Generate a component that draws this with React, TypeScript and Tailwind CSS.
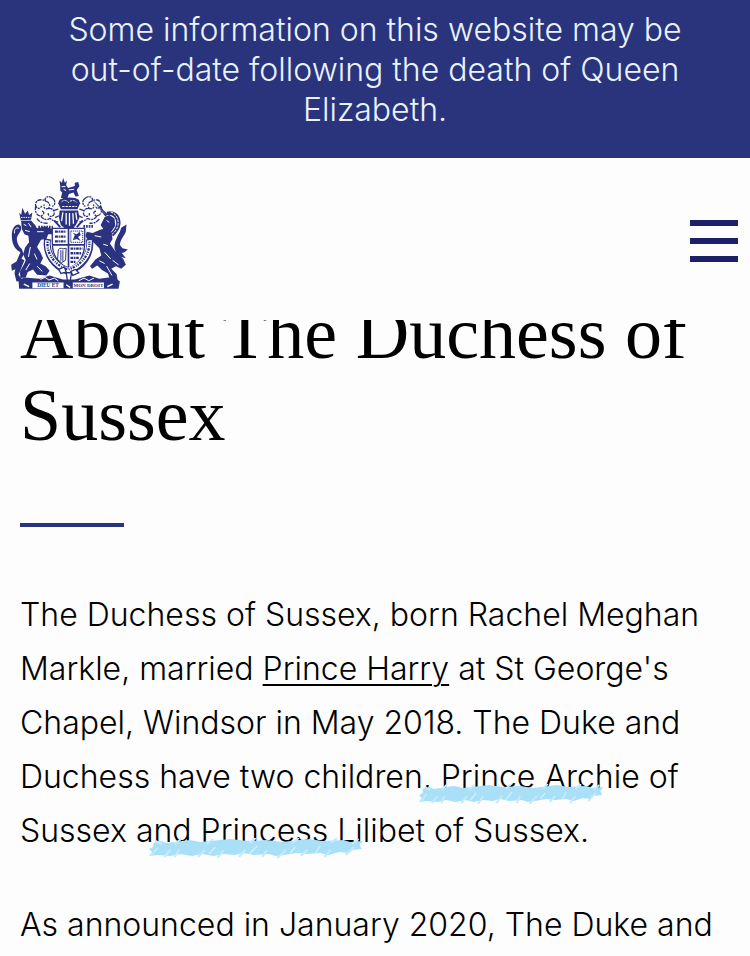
const NAVY = "#2b3380";

function Lion() {
  return (
    <g>
      {/* tail */}
      <path d="M62 262C48 256 36 240 36 214C35 192 44 178 56 178C65 180 66 190 62 199C58 207 52 212 51 221C51 234 57 244 66 252L72 268L50 312L36 318L34 300L50 290Z" />
      <path d="M44 205C42 192 50 186 57 190" fill="none" stroke="#fff" strokeWidth="3" />
      {/* crown */}
      <path d="M58 142L64 150L68 128L76 146L84 136L88 150L98 142L94 164L63 166Z" />
      <path d="M64 157H93" stroke="#fff" strokeWidth="3" strokeDasharray="4 3" />
      {/* head and body */}
      <path d="M64 168L94 166L106 180L112 190L136 184L160 192L162 208L146 208L140 222L124 224L112 246L122 262L130 280L122 296L138 304L150 318L140 332L112 330L100 314L84 322L78 338L62 340L60 320L72 300L78 286L70 268L76 248L88 232L86 212L74 208L66 192Z" />
      <path d="M72 178L80 182M86 174L94 186M76 196L90 200M112 200L132 200M92 246L86 276M104 266L112 284M90 296L78 316M112 304L128 320" fill="none" stroke="#fff" strokeWidth="3" />
      <path d="M50 292L62 280L74 286L66 306L56 330L70 348L50 350L44 326Z" />
    </g>
  );
}

function Unicorn() {
  return (
    <g>
      {/* horn */}
      <path d="M280 104L326 148L318 154Z" />
      <path d="M292 118L316 146" stroke="#fff" strokeWidth="2" strokeDasharray="3 4" />
      {/* mane */}
      <path d="M322 140C346 132 364 150 364 172C364 190 354 202 342 214L332 206C346 194 354 182 350 166C346 152 338 148 324 150Z" />
      <path d="M334 140C352 146 360 164 356 182C352 196 346 202 338 208" fill="none" stroke="#fff" strokeWidth="3" strokeDasharray="8 3" />
      {/* head and body */}
      <path d="M316 156L330 150L346 160L348 182L336 200L340 222L332 236L346 256L372 282L380 300L366 312L350 304L336 312L352 328L356 350L334 350L326 326L308 316L294 302L278 312L272 304L288 284L306 272L300 250L282 232L266 228L258 212L262 200L280 204L302 194L312 192L304 180Z" />
      <path d="M322 166L330 172M286 212L306 216M312 238L326 242M316 262L334 282M300 288L316 296M340 286L358 300M322 304L338 332" fill="none" stroke="#fff" strokeWidth="3" />
      {/* tail */}
      <path d="M346 252C344 230 354 216 362 200L366 188L382 178L380 200C374 214 364 222 362 240L370 250L386 254L376 262L368 264L380 280L364 276L352 266Z" />
    </g>
  );
}

function Mantling() {
  return (
    <g fill="none" stroke={NAVY} strokeWidth="4" strokeDasharray="13 2 6 3">
      <path d="M160 100C146 88 132 96 138 108C124 98 104 106 108 122C112 134 124 130 126 122M138 108C150 110 154 122 146 130C136 134 130 126 134 118M108 122C104 140 112 154 124 152C136 148 134 138 126 138M146 130C160 128 168 140 162 150C154 158 144 152 146 144M124 152C128 164 142 166 150 160C160 164 166 174 176 170M160 100C170 108 166 120 158 124M112 160C118 172 134 176 146 174M176 132L164 136M178 152L166 158" />
      <path d="M256 100C270 88 284 96 278 108C292 98 306 106 304 122C300 134 290 130 288 122M278 108C266 110 262 122 270 130C280 134 286 126 282 118M304 122C312 136 304 152 292 152C280 148 282 138 290 138M270 130C256 128 248 140 254 150C262 158 272 152 270 144M292 152C288 164 274 166 266 160C256 164 250 174 240 170M256 100C246 108 250 120 258 124M300 162C292 172 282 176 270 174M240 132L252 136M238 152L250 158" />
    </g>
  );
}

function Shield() {
  return (
    <g>
      <path d="M158 190H256V232C256 276 236 300 208 310C180 300 158 276 158 232Z" fill="#fff" stroke={NAVY} strokeWidth="4" />
      <path d="M207 190V308M160 240H256" stroke={NAVY} strokeWidth="5" />
      {/* quarters */}
      <path d="M166 200H200M166 215H200M166 229H200" stroke={NAVY} strokeWidth="7" strokeDasharray="9 2 4 2" />
      <path d="M214 198H250V232H214Z" fill="none" stroke={NAVY} strokeWidth="3" strokeDasharray="4 2" />
      <path d="M220 226L226 210L220 204L232 208L240 200L244 210L236 216L244 228L232 222Z" />
      <path d="M174 284L176 258C176 250 184 248 190 252L200 250L198 286L186 294ZM184 256V288M190 256V290" fill="none" stroke={NAVY} strokeWidth="3" />
      <path d="M213 251H249M213 265H246M213 279H238M213 291H228" stroke={NAVY} strokeWidth="7" strokeDasharray="8 2 5 2" />
      {/* garter */}
      <path d="M144 222C136 266 164 306 206 320C248 306 278 268 270 222" fill="none" stroke={NAVY} strokeWidth="21" />
      <path d="M144 226C138 266 166 304 206 316C246 304 274 268 270 226" fill="none" stroke="#fff" strokeWidth="14" />
      <path d="M144 230C140 266 166 302 206 314C246 302 272 268 270 230" fill="none" stroke={NAVY} strokeWidth="7" strokeDasharray="4 3 7 4 3 3" />
      <path d="M178 314L194 306L200 322L184 326ZM214 320L228 314L238 324L220 332ZM200 324H216L212 350H204Z" fill="#fff" stroke={NAVY} strokeWidth="4" />
    </g>
  );
}

function RoyalCrest() {
  return (
    <svg viewBox="32 38 356 338" className="h-[112px] w-[119px]" fill={NAVY} aria-hidden="true">
      <Mantling />
      {/* crest: crowned lion on a crown */}
      <path d="M182 62L180 46L187 52L191 38L196 52L202 46L200 60L206 68L226 62L226 52L236 50L240 62L232 74L238 92L228 94L222 82L208 86L204 98L184 98L188 82L182 76Z" />
      <path d="M186 64H198M192 72L200 76M208 74L224 72" stroke="#fff" strokeWidth="3" />
      <path d="M180 104C190 94 230 94 238 104L242 114L234 132H184L176 114Z" />
      <path d="M186 110C194 102 202 106 207 112C214 104 226 104 232 112M188 124H232" fill="none" stroke="#fff" strokeWidth="3" strokeDasharray="7 3" />
      {/* helm */}
      <path d="M180 136H236L240 158L230 178L220 192H198L184 180L178 158Z" />
      <path d="M190 142L186 168M200 144V178M210 144V182M220 144L222 176M229 142L232 164" stroke="#fff" strokeWidth="4" />
      <path d="M164 166L182 186M250 166L232 186" stroke={NAVY} strokeWidth="6" />
      <path d="M116 186H160M252 184H282" stroke={NAVY} strokeWidth="8" strokeDasharray="5 3" />
      <Lion />
      <Unicorn />
      <Shield />
      {/* compartment and motto scroll */}
      <path d="M56 346L74 338L120 342L150 332L190 344L226 344L270 332L300 342L344 336L362 350L358 372H58Z" />
      <path d="M122 344L136 338L148 346L164 340L176 348M238 348L254 340L268 348L284 340" fill="none" stroke="#fff" strokeWidth="3" />
      <path d="M98 353H192V371H98ZM220 353H314V371H220Z" fill="#fff" />
      <path d="M72 358L88 366M324 366L340 358M200 360L212 368" stroke="#fff" strokeWidth="4" />
      <text x="145" y="368" fontSize="16" textAnchor="middle" fontFamily="Liberation Serif, serif" fontWeight="700">DIEU ET</text>
      <text x="267" y="368" fontSize="15" textAnchor="middle" fontFamily="Liberation Serif, serif" fontWeight="700">MON DROIT</text>
    </svg>
  );
}

function Marked({ children }: { children: string }) {
  return (
    <span className="relative">
      {children}
      <svg
        viewBox="0 0 200 20"
        preserveAspectRatio="none"
        className="absolute -inset-x-1 -bottom-2 h-5 w-[calc(100%+12px)]"
        aria-hidden="true"
      >
        <path
          d="M4 5L12 3L16 5L38 2L48 4L76 1L92 3L110 2L124 4L150 1L162 3L182 2L188 4L200 3L197 7L199 11L190 12L186 15L178 14L168 17L160 15L148 16L138 15L126 17L118 18L112 16L98 17L88 15L80 17L70 16L60 18L50 16L40 18L30 16L20 18L8 17L0 18L3 14L0 11L4 9Z"
          fill="#a9e0f8"
        />
        <path
          d="M2 18L8 10M14 19L20 12M24 19L28 12M46 19L52 12M64 20L70 12M84 19L90 12M106 19L110 12M120 20L128 12M142 18L148 12M164 19L170 12M184 17L192 9M6 3L12 6M30 1L24 6M60 1L54 6M100 0L94 5M140 0L134 5M176 0L170 5M196 1L190 6"
          stroke="#c4eafb"
          strokeWidth="2"
        />
        <path d="M56 16L62 9M94 16L101 8M132 15L137 9M156 15L160 8" stroke="#cdeffc" strokeWidth="1.5" />
      </svg>
    </span>
  );
}

export default function App() {
  return (
    <div className="h-screen overflow-hidden bg-[#fdfdfd] font-['Inter',sans-serif] font-light text-black">
      <aside className="bg-[#2a347c] px-14 pt-[10px] pb-7 text-center text-[32px] leading-10 text-[#e9f3ff]">
        Some information on this website may be out-of-date following the death of Queen Elizabeth.
      </aside>

      <header className="flex items-center justify-between pt-5 pr-3 pb-[30px] pl-[10px]">
        <a href="#home" aria-label="The Royal Family home">
          <RoyalCrest />
        </a>
        <button type="button" aria-label="Open menu" className="flex w-12 flex-col gap-3 pt-[14px]">
          <span className="h-[6px] w-full bg-[#1b2068]" />
          <span className="h-[6px] w-full bg-[#1b2068]" />
          <span className="h-[6px] w-full bg-[#1b2068]" />
        </button>
      </header>

      <main className="overflow-hidden px-5">
        <h1 className="-mt-7 font-['Liberation_Serif',serif] text-[74px] leading-[82px] font-normal">
          About The Duchess of Sussex
        </h1>
        <div className="mt-[67px] h-1 w-[104px] bg-[#2a347c]" />
        <div className="mt-[61px] flex flex-col gap-10 text-[32px] leading-[54px]">
          <p>
            The Duchess of Sussex, born Rachel Meghan Markle, married{" "}
            <a href="#prince-harry" className="underline decoration-2 underline-offset-4">
              Prince Harry
            </a>{" "}
            at St George's Chapel, Windsor in May 2018. The Duke and Duchess have two children
            <Marked>, Prince Arc</Marked>hie of Sussex a<Marked>nd Princess L</Marked>ilibet of Sussex.
          </p>
          <p>As announced in January 2020, The Duke and</p>
        </div>
      </main>
    </div>
  );
}
